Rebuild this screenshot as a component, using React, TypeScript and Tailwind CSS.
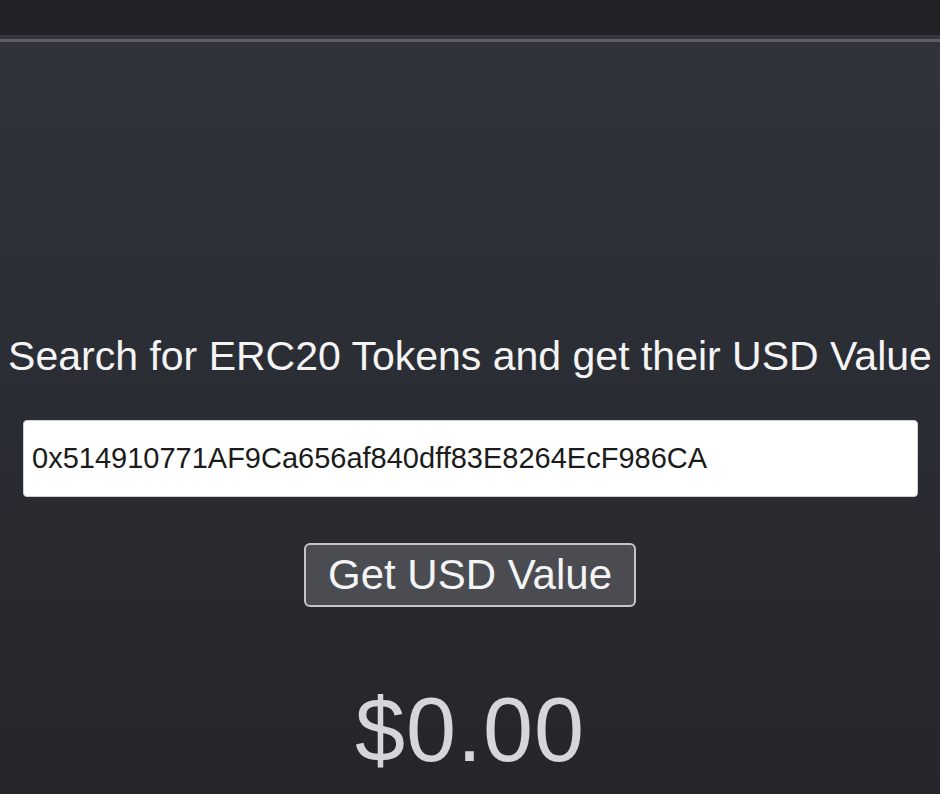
import React, { useState } from "react";

const App = () => {
  const [address, setAddress] = useState(
    "0x514910771AF9Ca656af840dff83E8264EcF986CA"
  );
  const [value] = useState("$0.00");

  return (
    <div
      className="h-[794px] w-full overflow-hidden bg-gradient-to-b from-[#31343c] to-[#24262b]"
      style={{ fontFamily: '"Liberation Sans", Arial, sans-serif' }}
    >
      {/* browser chrome strip */}
      <div className="h-[35px] bg-[#212226]" />
      <div className="h-[4px] bg-[#34363b]" />
      <div className="h-[3px] bg-[#5c5e63]" />

      <div className="flex flex-col items-center">
        <h1 className="mt-[294px] text-[41px] leading-none text-[#f4f4f5] whitespace-nowrap">
          Search for ERC20 Tokens and get their USD Value
        </h1>

        <div className="mt-[43px] w-full px-[23px] pr-[22px]">
          <input
            value={address}
            onChange={(e) => setAddress(e.target.value)}
            className="h-[77px] w-full rounded-[4px] border border-[#d0d0d0] bg-white px-[8px] text-[29px] text-[#1b1b1b] outline-none"
          />
        </div>

        <button className="mt-[46px] h-[64px] w-[332px] rounded-[6px] border-2 border-[#c4c5c8] bg-[#4a4c52] text-[42px] leading-none text-[#f4f4f5]">
          Get USD Value
        </button>

        <div className="mt-[78px] text-[90px] leading-none tracking-[1px] text-[#d5d6d9]">
          {value}
        </div>
      </div>
    </div>
  );
};

export default App;
